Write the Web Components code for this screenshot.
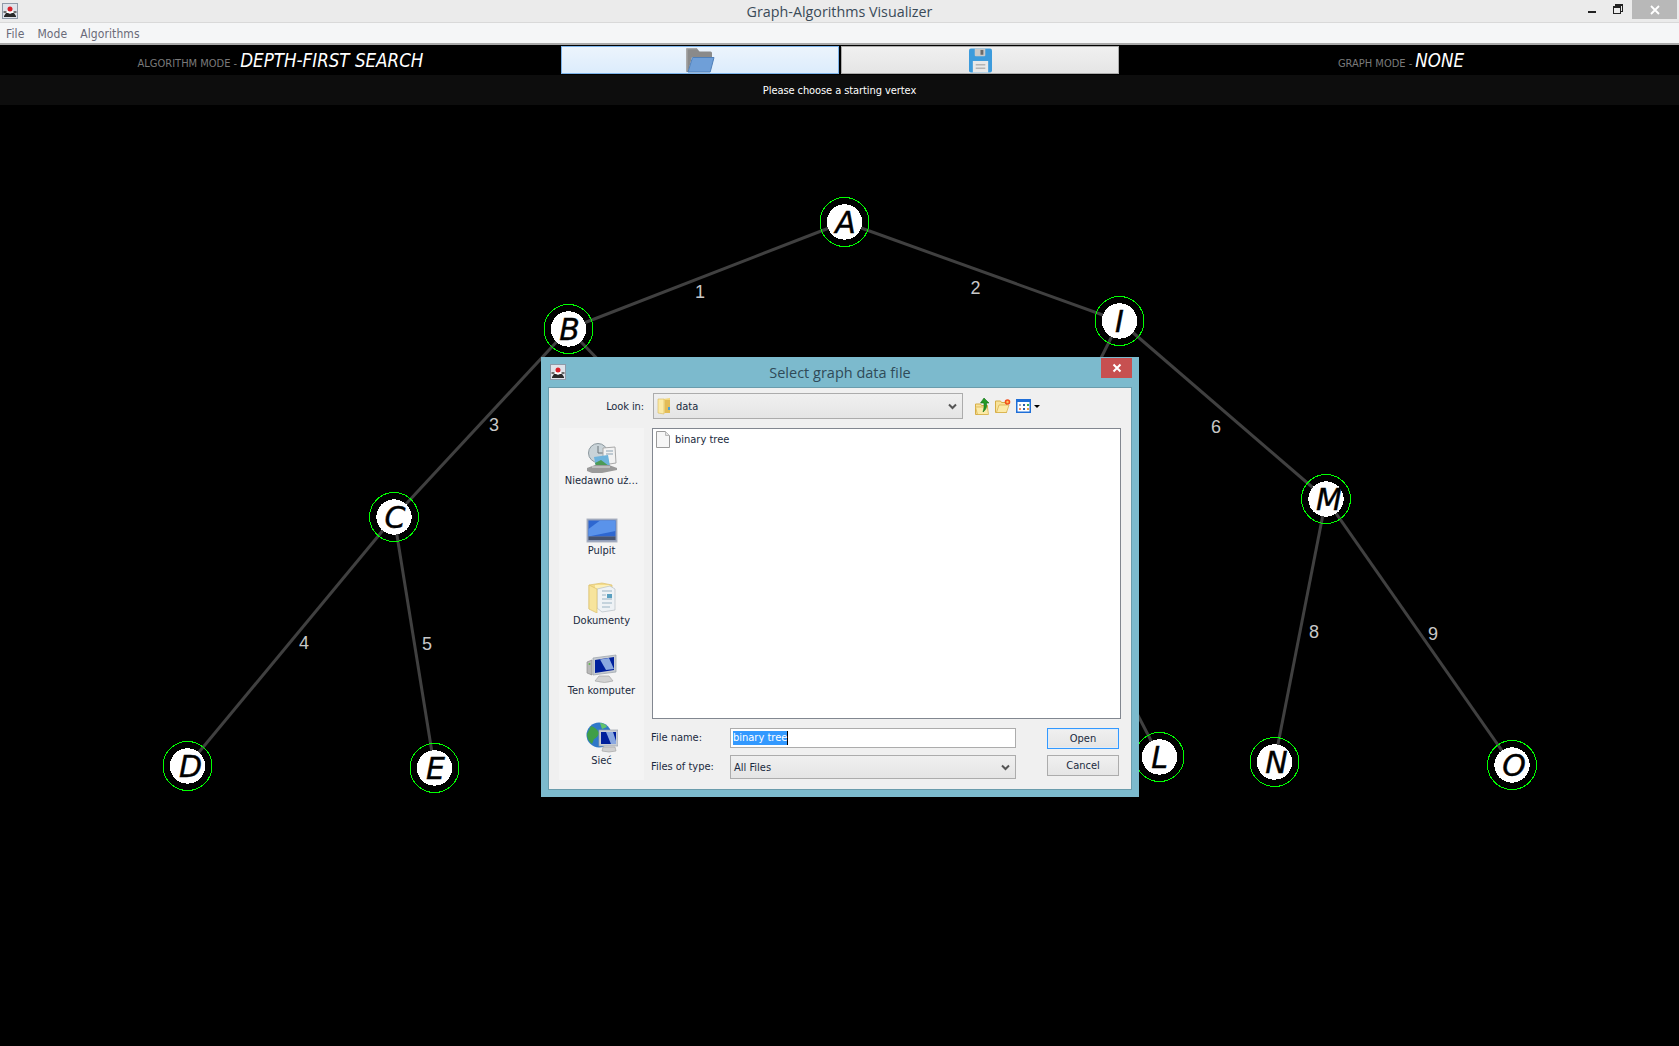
<!DOCTYPE html>
<html>
<head>
<meta charset="utf-8">
<title>Graph-Algorithms Visualizer</title>
<style>
  html, body { margin: 0; background: #000; height: 100%; overflow: hidden; }
</style>
</head>
<body>
<app-window>
  <title-bar slot="top" text="Graph-Algorithms Visualizer"></title-bar>
  <menu-bar slot="top"></menu-bar>
  <mode-header slot="top"></mode-header>
  <status-line slot="top">Please choose a starting vertex</status-line>
  <graph-canvas></graph-canvas>
  <file-dialog slot="over"></file-dialog>
</app-window>

<script>
const UI_FONT = '"DejaVu Sans Condensed", "DejaVu Sans", sans-serif';

const ICONS = {
  java: `<svg viewBox="0 0 16 16" width="16" height="16"><rect width="16" height="16" fill="#dfe3ea"/><rect x=".5" y=".5" width="15" height="15" fill="none" stroke="#8f9aa8"/><path d="M6 9l2-6 2 6z" fill="#f4f4f4"/><path d="M4 8l4-1 4 1 1 2H3z" fill="#fff"/><path d="M2 13l2-3h2l2 1 2-1h2l2 3v1H2z" fill="#2a2a2a"/><path d="M1.500 8h3v2h-3zM11.500 8h3v2h-3z" fill="#6c6c6c"/><circle cx="8" cy="6" r="2.500" fill="#d9202a"/></svg>`,
  openFolder: `<svg viewBox="0 0 30 26" width="30" height="26"><path d="M1 2.5q0-1.5 1.500-1.500h9l3 3.500h11q1.500 0 1.500 1.500v4H7L3 25H2.500Q1 25 1 23.500z" fill="#8a8a8a"/><path d="M1 2.500q0-1.500 1.500-1.500h9l1 1.200H2.500V24H1z" fill="#a9a9a9"/><path d="M7.500 10.500H29l-3.800 14.500H3z" fill="#6f9fd8" stroke="#4f7fb8"/></svg>`,
  save: `<svg viewBox="0 0 24 25" width="23" height="25"><path d="M2 0h20q2 0 2 2v21q0 2-2 2H2q-2 0-2-2V2Q0 0 2 0z" fill="#3c9bdc"/><path d="M6 0h11v7q0 1-1 1H7Q6 8 6 7z" fill="#c9c9c9"/><rect x="12" y="1.500" width="3" height="5" fill="#6a6a6a"/><rect x="4" y="13" width="16" height="12" fill="#e8e8e8"/><path d="M7 17h10M7 20.500h10" stroke="#b4b4b4" stroke-width="1.500"/></svg>`,
  folderSmall: `<svg viewBox="0 0 14 18" width="14" height="18"><path d="M1 2h5l7-1v15H1z" fill="#f2d77f"/><path d="M1 2h6v15l-6-1z" fill="#fbeaa6" stroke="#d8b95a" stroke-width=".6"/><path d="M8 3h5v13H8z" fill="#e3bc57"/><rect x="11" y="10" width="2" height="3" fill="#4a9fd8"/></svg>`,
  doc: `<svg viewBox="0 0 14 17" width="14" height="17"><path d="M.5.5h9l4 4v12H.5z" fill="#f6f6f6" stroke="#9a9a9a"/><path d="M9.500.5v4h4" fill="#e2e2e2" stroke="#b8b8b8"/></svg>`,
  upFolder: `<svg viewBox="0 0 15 17" width="15" height="17"><path d="M.5 6h5l1 1.500h6v9H.5z" fill="#f8e29a" stroke="#d6ad45"/><path d="M2.500 16.500L.5 9h12l1 7.500z" fill="#fbeaa8" stroke="#d6ad45" stroke-width=".7"/><path d="M9 0l5 5h-2.500c.6 4-.6 7-3.500 9 1-3 1.400-6 .8-9H5.500z" fill="#249a26" stroke="#15701a" stroke-width=".6"/></svg>`,
  newFolder: `<svg viewBox="0 0 16 14" width="16" height="14"><path d="M.5 2h5l1 1.500h5v10H.5z" fill="#f8e29a" stroke="#d6ad45"/><path d="M1.500 13.500L4 6h10l-2.500 7.500z" fill="#fbeaa8" stroke="#d6ad45" stroke-width=".7"/><circle cx="12.500" cy="3" r="2.800" fill="#f24f1d"/><circle cx="12.500" cy="3" r="1.200" fill="#ffc35a"/></svg>`,
  viewMenu: `<svg viewBox="0 0 15 14" width="15" height="14"><rect x=".75" y=".75" width="13.500" height="12.500" fill="#fff" stroke="#1f6fd8" stroke-width="1.500"/><rect x="1" y="1" width="13" height="2" fill="#1f6fd8"/><rect x="3" y="5" width="2" height="2" fill="#9aa7c4"/><rect x="7" y="5" width="2" height="2" fill="#2c5ea8"/><rect x="11" y="5" width="2" height="2" fill="#3cab4a"/><rect x="3" y="9" width="2" height="2" fill="#f08a5a"/><rect x="7" y="9" width="2" height="2" fill="#2c5ea8"/><rect x="11" y="9" width="2" height="2" fill="#f0a040"/></svg>`,
  recent: `<svg viewBox="0 0 32 30" width="32" height="30"><circle cx="12" cy="10" r="9.500" fill="#c9d3d8" stroke="#8b979d"/><path d="M12 3v7h5" fill="none" stroke="#6b757a"/><path d="M17 5l12-1 1 16-13 2z" fill="#f2f2f2" stroke="#a8a8a8"/><path d="M20 8h7M20 11h7" stroke="#8aa0b0"/><path d="M8 14l14-2 2 11-14 2z" fill="#6db3dc"/><path d="M9 20l6-3 8 6-12 2z" fill="#4d9a55"/><path d="M1 25l8-3h14l8 3v2l-15 3H6l-5-2z" fill="#9a9a9a"/><path d="M6 24h18" stroke="#e0e0e0"/></svg>`,
  desktop: `<svg viewBox="0 0 32 25" width="32" height="25"><rect x="1" y="1" width="30" height="23" fill="#8f9cb8" stroke="#aeb4c2"/><rect x="2.500" y="2.500" width="27" height="16" fill="#2e67d0"/><path d="M2.500 18.500V11L14 2.500h15.500V13z" fill="#5a93ea"/><rect x="2.500" y="18.500" width="27" height="3.500" fill="#46536e"/></svg>`,
  documents: `<svg viewBox="0 0 28 31" width="28" height="31"><path d="M1 3l13-2 10 2v22H8L1 27z" fill="#f4dc8c" stroke="#dcc06c" stroke-width=".7"/><path d="M7 3h14l2 2v21H7z" fill="#fdf0b8"/><path d="M9 7l13-3 5 3v21l-13 2-5-4z" fill="#eef2f5" stroke="#b8c0c6" stroke-width=".7"/><path d="M14 9h10M14 13h4M14 17h10M14 21h10M14 25h8" stroke="#9ab4c4"/><rect x="19" y="12" width="5" height="4" fill="#5aa0c0"/><path d="M1 3l8 4v24l-8-4z" fill="#f7e49c" stroke="#dcc06c" stroke-width=".7"/></svg>`,
  computer: `<svg viewBox="0 0 32 29" width="32" height="29"><path d="M1 8l5-2v15l-5-2z" fill="#b8b8b8" stroke="#8c8c8c" stroke-width=".7"/><circle cx="3.500" cy="10" r="1" fill="#5fb84c"/><path d="M7 4l23-3v17L7 21z" fill="#c7ccd2" stroke="#9aa0a8" stroke-width=".7"/><path d="M9 6l19-3v13L9 19z" fill="#00209c"/><path d="M14 5.500l9-1.500 5 11-8 1z" fill="#8aa8e0"/><path d="M13 22h10l4 5q-8 3-18 0z" fill="#d2d2d2" stroke="#a8a8a8" stroke-width=".7"/></svg>`,
  network: `<svg viewBox="0 0 32 31" width="32" height="31"><circle cx="13" cy="13" r="12.500" fill="#2f78c8"/><path d="M5 4q6 2 8 7-1 4-5 6l-2 5Q1 18 1 12z" fill="#3f9f46"/><path d="M14 1q5 0 7 4l-5 2z" fill="#63c46a"/><rect x="13" y="8" width="19" height="16" fill="#c9ced4" stroke="#9aa0a8" stroke-width=".7"/><path d="M15 10h15v12H15z" fill="#00209c"/><path d="M20 10h7l3 9v3h-5z" fill="#8aa8e0"/><path d="M17 25h12l1 4q-7 2-14 0z" fill="#d0d0d0" stroke="#a8a8a8" stroke-width=".7"/></svg>`,
  chevron: `<svg viewBox="0 0 9 7" width="9" height="7"><path d="M1 1.500l3.500 3.500L8 1.500" fill="none" stroke="#555" stroke-width="2"/></svg>`
};

class UiIcon extends HTMLElement {
  connectedCallback() {
    if (this.shadowRoot) return;
    this.attachShadow({ mode: "open" });
    this.shadowRoot.innerHTML = `
      <style>:host { display: inline-flex; flex: none; } svg { display: block; }</style>
      ${ICONS[this.getAttribute("name")] || ""}`;
  }
}

class AppWindow extends HTMLElement {
  constructor() {
    super();
    this.attachShadow({ mode: "open" });
    this.shadowRoot.innerHTML = `
      <style>
        :host { display: flex; flex-direction: column; position: relative; width: 1679px; height: 1046px; background: #000; overflow: hidden; }
      </style>
      <slot name="top"></slot>
      <slot></slot>
      <slot name="over"></slot>`;
  }
}

class TitleBar extends HTMLElement {
  constructor() {
    super();
    this.attachShadow({ mode: "open" });
    this.shadowRoot.innerHTML = `
      <style>
        :host { display: flex; position: relative; height: 22px; background: #ebebeb; border-bottom: 1px solid #d9d9d9; align-items: flex-start; }
        .app { margin: 3px 0 0 2px; }
        .title { position: absolute; left: 0; right: 0; top: 1px; text-align: center; font: 14.300px/22px "Open Sans", sans-serif; color: #3a4a58; }
        .controls { margin-left: auto; display: flex; height: 19px; margin-right: 2px; }
        .min { width: 8px; height: 2px; background: #222; margin: 11px 17px 0 0; }
        .restore { position: relative; width: 10px; height: 10px; margin: 4px 9px 0 0; }
        .restore i { position: absolute; box-sizing: border-box; border: 1px solid #222; background: #ebebeb; }
        .restore i:first-child { left: 2px; top: 0; width: 8px; height: 8px; border-top-width: 2px; }
        .restore i:last-child { left: 0; top: 2px; width: 8px; height: 8px; border-top-width: 2px; }
        .close { width: 45px; background: #b8b8b8; display: flex; align-items: center; justify-content: center; }
      </style>
      <ui-icon class="app" name="java"></ui-icon>
      <div class="title"></div>
      <div class="controls">
        <div class="min"></div>
        <div class="restore"><i></i><i></i></div>
        <div class="close"><svg width="10" height="10" viewBox="0 0 10 10"><path d="M1 1l8 8M9 1l-8 8" stroke="#fff" stroke-width="1.800"/></svg></div>
      </div>`;
  }
  connectedCallback() {
    this.shadowRoot.querySelector(".title").textContent = this.getAttribute("text");
  }
}

class MenuBar extends HTMLElement {
  constructor() {
    super();
    this.attachShadow({ mode: "open" });
    this.shadowRoot.innerHTML = `
      <style>
        :host { display: flex; height: 20px; background: #f5f6f7; border-bottom: 2px solid #a9a9a9; padding-left: 6px; gap: 13px; font: 12px/23px ${UI_FONT}; letter-spacing: .1px; color: #6a6a78; }
      </style>
      <span>File</span><span>Mode</span><span>Algorithms</span>`;
  }
}

class ModeHeader extends HTMLElement {
  constructor() {
    super();
    this.attachShadow({ mode: "open" });
    this.shadowRoot.innerHTML = `
      <style>
        :host { display: grid; grid-template-columns: 561px 558px 560px; height: 30px; background: #000; font-family: ${UI_FONT}; }
        .mode { display: flex; justify-content: center; align-items: baseline; padding-top: 2px; gap: 3px; line-height: 27px; }
        .mode.right { padding-left: 4px; }
        .label { font-size: 11px; color: #7a7a7a; }
        .value { font-size: 18.600px; font-style: italic; color: #fff; }
        .buttons { display: flex; gap: 2px; height: 28px; margin-top: 1px; }
        .tool { flex: 1; box-sizing: border-box; display: flex; align-items: center; justify-content: center; border: 1px solid #acacac; background: linear-gradient(#f0f0f0, #e5e5e5); }
        .tool.active { border-color: #7eb4ea; background: linear-gradient(#ecf4fc, #dcecfc); }
      </style>
      <div class="mode"><span class="label">ALGORITHM MODE -</span><span class="value">DEPTH-FIRST SEARCH</span></div>
      <div class="buttons">
        <div class="tool active"><ui-icon name="openFolder"></ui-icon></div>
        <div class="tool"><ui-icon name="save"></ui-icon></div>
      </div>
      <div class="mode right"><span class="label">GRAPH MODE -</span><span class="value">NONE</span></div>`;
  }
}

class StatusLine extends HTMLElement {
  constructor() {
    super();
    this.attachShadow({ mode: "open" });
    this.shadowRoot.innerHTML = `
      <style>
        :host { display: block; height: 30px; background: #0d0d0d; color: #fff; text-align: center; font: 11px/32px ${UI_FONT}; letter-spacing: -.08px; }
      </style>
      <slot></slot>`;
  }
}

// centre x, centre y, and how far the letter sits off centre
const NODES = {
  A: [844.5, 222, 1], B: [568.5, 329, 1], C: [394, 517, 1], D: [187.5, 766, 3], E: [434.5, 768, 1],
  I: [1119.5, 321, 0], L: [1159.5, 757, 0], M: [1326, 499, 3], N: [1274.5, 762, 2], O: [1512, 765, 2]
};
const EDGES = [
  [NODES.A, NODES.B], [NODES.A, NODES.I], [NODES.B, NODES.C], [NODES.C, NODES.D], [NODES.C, NODES.E],
  [NODES.I, NODES.M], [NODES.M, NODES.N], [NODES.M, NODES.O],
  // these three run on under the dialog
  [NODES.B, [610, 372]], [NODES.I, [1095, 370]], [NODES.L, [1130, 700]]
];
const WEIGHTS = [
  ["1", 700, 292], ["2", 975.500, 288], ["3", 494, 425], ["4", 304, 643],
  ["5", 427, 644], ["6", 1216, 427], ["8", 1314, 632], ["9", 1433, 634]
];

class GraphCanvas extends HTMLElement {
  constructor() {
    super();
    this.attachShadow({ mode: "open" });
    const lines = EDGES.map(([a, b]) =>
      `<line x1="${a[0]}" y1="${a[1]}" x2="${b[0]}" y2="${b[1]}" stroke="#404040" stroke-width="3"/>`).join("");
    const weights = WEIGHTS.map(([t, x, y]) =>
      `<text class="weight" x="${x}" y="${y}">${t}</text>`).join("");
    const nodes = Object.keys(NODES).map(k => {
      const [x, y, dx] = NODES[k];
      return `<circle cx="${x}" cy="${y}" r="17.700" fill="#fff" shape-rendering="crispEdges"/>
        <circle cx="${x}" cy="${y}" r="24.500" fill="none" stroke="#00ff00" stroke-width="1" shape-rendering="crispEdges"/>
        <text class="letter" x="${x + dx}" y="${y + 11}">${k}</text>`;
    }).join("");
    this.shadowRoot.innerHTML = `
      <style>
        :host { display: block; flex: 1; min-height: 0; background: #000; }
        svg { display: block; width: 100%; height: 100%; }
        .weight { font: 18px "Liberation Sans", sans-serif; fill: #c8c8c8; text-anchor: middle; dominant-baseline: central; }
        .letter { font: italic 30px "DejaVu Sans", sans-serif; fill: #000; stroke: #000; stroke-width: .4px; text-anchor: middle; }
      </style>
      <svg viewBox="0 105 1679 941">${lines}${weights}${nodes}</svg>`;
  }
}

class PlaceItem extends HTMLElement {
  constructor() {
    super();
    this.attachShadow({ mode: "open" });
    this.shadowRoot.innerHTML = `
      <style>
        :host { display: flex; flex: none; flex-direction: column; align-items: center; justify-content: flex-end; height: 70px; font: 11px/14px ${UI_FONT}; color: #1a2a40; white-space: nowrap; }
        .pic { display: flex; align-items: flex-end; margin-bottom: 1px; }
      </style>
      <div class="pic"><ui-icon name="${this.getAttribute("icon")}"></ui-icon></div>
      <slot></slot>`;
  }
}

class WinCombo extends HTMLElement {
  constructor() {
    super();
    this.attachShadow({ mode: "open" });
    this.shadowRoot.innerHTML = `
      <style>
        :host { display: flex; align-items: center; box-sizing: border-box; border: 1px solid #acacac; background: linear-gradient(#f0f0f0, #e5e5e5); font: 11px ${UI_FONT}; color: #1a2a40; padding: 0 5px 0 3px; }
        .arrow { margin-left: auto; display: flex; }
      </style>
      <slot></slot>
      <span class="arrow"><ui-icon name="chevron"></ui-icon></span>`;
  }
}

class WinButton extends HTMLElement {
  constructor() {
    super();
    this.attachShadow({ mode: "open" });
    this.shadowRoot.innerHTML = `
      <style>
        :host { display: flex; align-items: center; justify-content: center; box-sizing: border-box; height: 21px; border: 1px solid #acacac; background: linear-gradient(#f0f0f0, #e5e5e5); font: 11px ${UI_FONT}; color: #1a2a40; }
        :host([default]) { border: 1px solid #3399ff; box-shadow: inset 0 0 0 1px #e0ecf8; }
      </style>
      <slot></slot>`;
  }
}

class FileDialog extends HTMLElement {
  constructor() {
    super();
    this.attachShadow({ mode: "open" });
    this.shadowRoot.innerHTML = `
      <style>
        :host { position: absolute; left: 541px; top: 357px; width: 598px; height: 440px; box-sizing: border-box; display: flex; flex-direction: column; background: #7cbacd; padding: 0 7px 7px; font: 11px ${UI_FONT}; color: #1a2a40; }
        .title { position: relative; height: 30px; flex: none; display: flex; align-items: flex-start; }
        .title ui-icon { margin: 7px 0 0 2px; }
        .title .text { position: absolute; left: 0; right: 0; top: 5px; text-align: center; font: 14.500px/22px "Open Sans", sans-serif; color: #2f4a58; }
        .close { position: absolute; right: 0; top: 1px; width: 31px; height: 20px; background: #c75050; display: flex; align-items: center; justify-content: center; }
        .frame { flex: 1; min-height: 0; box-sizing: border-box; border: 1px solid #6a9cac; background: #f0f0f0; padding: 5px 10px 0 10px; display: grid; grid-template-columns: 85px 469px; grid-template-rows: 26px 291px 52px; column-gap: 8px; row-gap: 9px; }
        .lookin { display: flex; align-items: center; justify-content: flex-end; letter-spacing: -.1px; }
        .toolbar { display: flex; align-items: center; padding-left: 1px; }
        .toolbar win-combo { width: 310px; height: 26px; }
        .toolbar .data { display: flex; align-items: center; gap: 5px; }
        .tools { display: flex; align-items: center; margin-left: 12px; }
        .tools ui-icon + ui-icon { margin-left: 5px; }
        .caret { width: 0; height: 0; border: 3px solid transparent; border-top: 3px solid #000; border-bottom: 0; margin-left: 3px; }
        .places { grid-row: 2 / 4; background: #f4f4f4; display: flex; flex-direction: column; justify-content: flex-end; padding-bottom: 12px; min-height: 0; }
        .list { background: #fff; border: 1px solid #828790; box-sizing: border-box; padding: 2px 3px; }
        .file { display: flex; align-items: center; gap: 5px; }
        .form { display: grid; grid-template-columns: 78px 286px 72px; grid-template-rows: 20px 24px; column-gap: 0; row-gap: 7px; align-items: center; }
        .form .field { box-sizing: border-box; height: 20px; border: 1px solid #acacac; background: #fff; display: flex; align-items: center; padding-left: 2px; }
        .sel { background: #3399ff; color: #fff; height: 14px; line-height: 14px; border-right: 1px solid #000; }
        .form win-combo { height: 24px; }
        .form win-button { margin-left: 31px; width: 72px; }
        .form .lb { padding-bottom: 2px; margin-left: -1px; }
        .form .cancel { align-self: start; }
      </style>
      <div class="title">
        <ui-icon name="java"></ui-icon>
        <div class="text">Select graph data file</div>
        <div class="close"><svg width="10" height="10" viewBox="0 0 10 10"><path d="M1.500 1.500l7 7M8.500 1.500l-7 7" stroke="#fff" stroke-width="2"/></svg></div>
      </div>
      <div class="frame">
        <div class="lookin">Look in:</div>
        <div class="toolbar">
          <win-combo><span class="data"><ui-icon name="folderSmall"></ui-icon>data</span></win-combo>
          <div class="tools">
            <ui-icon name="upFolder"></ui-icon>
            <ui-icon name="newFolder"></ui-icon>
            <ui-icon name="viewMenu"></ui-icon>
            <span class="caret"></span>
          </div>
        </div>
        <div class="places">
          <place-item icon="recent">Niedawno uż…</place-item>
          <place-item icon="desktop">Pulpit</place-item>
          <place-item icon="documents">Dokumenty</place-item>
          <place-item icon="computer">Ten komputer</place-item>
          <place-item icon="network">Sieć</place-item>
        </div>
        <div class="list"><div class="file"><ui-icon name="doc"></ui-icon>binary tree</div></div>
        <div class="form">
          <div class="lb">File name:</div>
          <div class="field"><span class="sel">binary tree</span></div>
          <win-button default>Open</win-button>
          <div class="lb">Files of type:</div>
          <win-combo>All Files</win-combo>
          <win-button class="cancel">Cancel</win-button>
        </div>
      </div>`;
  }
}

customElements.define("ui-icon", UiIcon);
customElements.define("app-window", AppWindow);
customElements.define("title-bar", TitleBar);
customElements.define("menu-bar", MenuBar);
customElements.define("mode-header", ModeHeader);
customElements.define("status-line", StatusLine);
customElements.define("graph-canvas", GraphCanvas);
customElements.define("place-item", PlaceItem);
customElements.define("win-combo", WinCombo);
customElements.define("win-button", WinButton);
customElements.define("file-dialog", FileDialog);
</script>
</body>
</html>
